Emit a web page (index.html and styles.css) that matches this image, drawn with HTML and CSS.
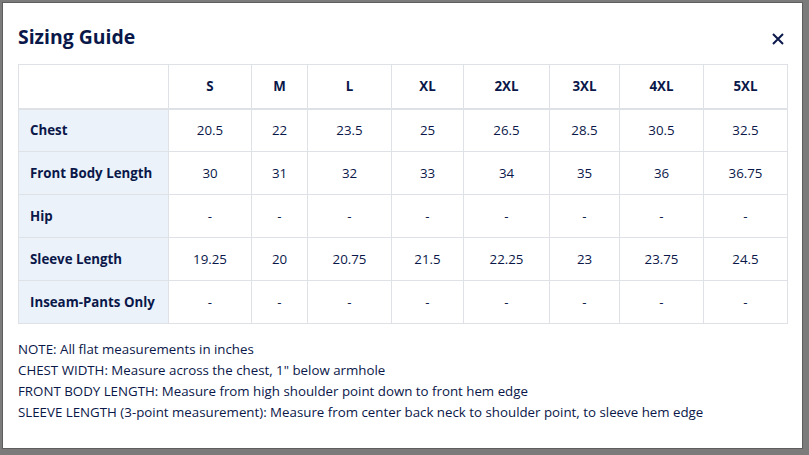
FILE: index.html
```html
<!DOCTYPE html>
<html>
<head>
<meta charset="utf-8">
<link rel="stylesheet" href="styles.css">
</head>
<body>
<div class="modal">
  <div class="modal-header">
    <h5 class="modal-title">Sizing Guide</h5>
    <button class="close" aria-label="Close">
      <svg width="12" height="12" viewBox="0 0 12 12"><path d="M1 1 L11 11 M11 1 L1 11" stroke="#0c1a4b" stroke-width="2" fill="none"/></svg>
    </button>
  </div>
  <table class="size-table">
    <thead>
      <tr>
        <th class="c-label"></th>
        <th class="c-s">S</th>
        <th class="c-m">M</th>
        <th class="c-l">L</th>
        <th class="c-xl">XL</th>
        <th class="c-2xl">2XL</th>
        <th class="c-3xl">3XL</th>
        <th class="c-4xl">4XL</th>
        <th class="c-5xl">5XL</th>
      </tr>
    </thead>
    <tbody>
      <tr><th class="row-label">Chest</th><td>20.5</td><td>22</td><td>23.5</td><td>25</td><td>26.5</td><td>28.5</td><td>30.5</td><td>32.5</td></tr>
      <tr><th class="row-label">Front Body Length</th><td>30</td><td>31</td><td>32</td><td>33</td><td>34</td><td>35</td><td>36</td><td>36.75</td></tr>
      <tr><th class="row-label">Hip</th><td>-</td><td>-</td><td>-</td><td>-</td><td>-</td><td>-</td><td>-</td><td>-</td></tr>
      <tr><th class="row-label">Sleeve Length</th><td>19.25</td><td>20</td><td>20.75</td><td>21.5</td><td>22.25</td><td>23</td><td>23.75</td><td>24.5</td></tr>
      <tr><th class="row-label">Inseam-Pants Only</th><td>-</td><td>-</td><td>-</td><td>-</td><td>-</td><td>-</td><td>-</td><td>-</td></tr>
    </tbody>
  </table>
  <div class="notes">
    <p>NOTE: All flat measurements in inches</p>
    <p>CHEST WIDTH: Measure across the chest, 1" below armhole</p>
    <p>FRONT BODY LENGTH: Measure from high shoulder point down to front hem edge</p>
    <p>SLEEVE LENGTH (3-point measurement): Measure from center back neck to shoulder point, to sleeve hem edge</p>
  </div>
</div>
</body>
</html>
```

FILE: styles.css
```css
* { box-sizing: border-box; }
html, body { margin: 0; height: 100%; }
body {
  background: #7b7b7b;
  padding: 2px;
  font-family: "Open Sans", "Noto Sans", sans-serif;
  color: #0a1749;
  overflow: hidden;
}
.modal {
  width: 801px;
  height: 447px;
  background: #fff;
  border: 1px solid #5e5e5e;
  padding: 0 15px;
}
.modal-header {
  display: flex;
  align-items: center;
  justify-content: space-between;
  height: 61px;
  padding-top: 7px;
}
.modal-title {
  margin: 0;
  font-size: 19.4px;
  font-weight: 700;
  line-height: 30px;
}
.close {
  background: none;
  border: 0;
  padding: 0;
  margin-right: 3px;
  margin-top: 4px;
  display: flex;
}
.size-table {
  border-collapse: collapse;
  table-layout: fixed;
  width: 769px;
  font-size: 13.3px;
}
.size-table th, .size-table td {
  border: 1px solid #dee2e6;
  height: 43px;
  padding: 0 11px;
  text-align: center;
  line-height: 20px;
}
.size-table thead th {
  border-bottom: 2px solid #dee2e6;
  height: 44px;
  font-weight: 700;
}
.size-table td { font-weight: 400; }
.row-label {
  text-align: left !important;
  background: #ebf2fa;
  font-weight: 700;
}
.c-label { width: 150px; }
.c-s { width: 83px; }
.c-m { width: 56px; }
.c-l { width: 84px; }
.c-xl { width: 72px; }
.c-2xl { width: 86px; }
.c-3xl { width: 70px; }
.c-4xl { width: 84px; }
.c-5xl { width: 84px; }
.notes {
  margin-top: 15px;
  font-size: 13.3px;
  line-height: 21px;
}
.notes p { margin: 0; }
```
